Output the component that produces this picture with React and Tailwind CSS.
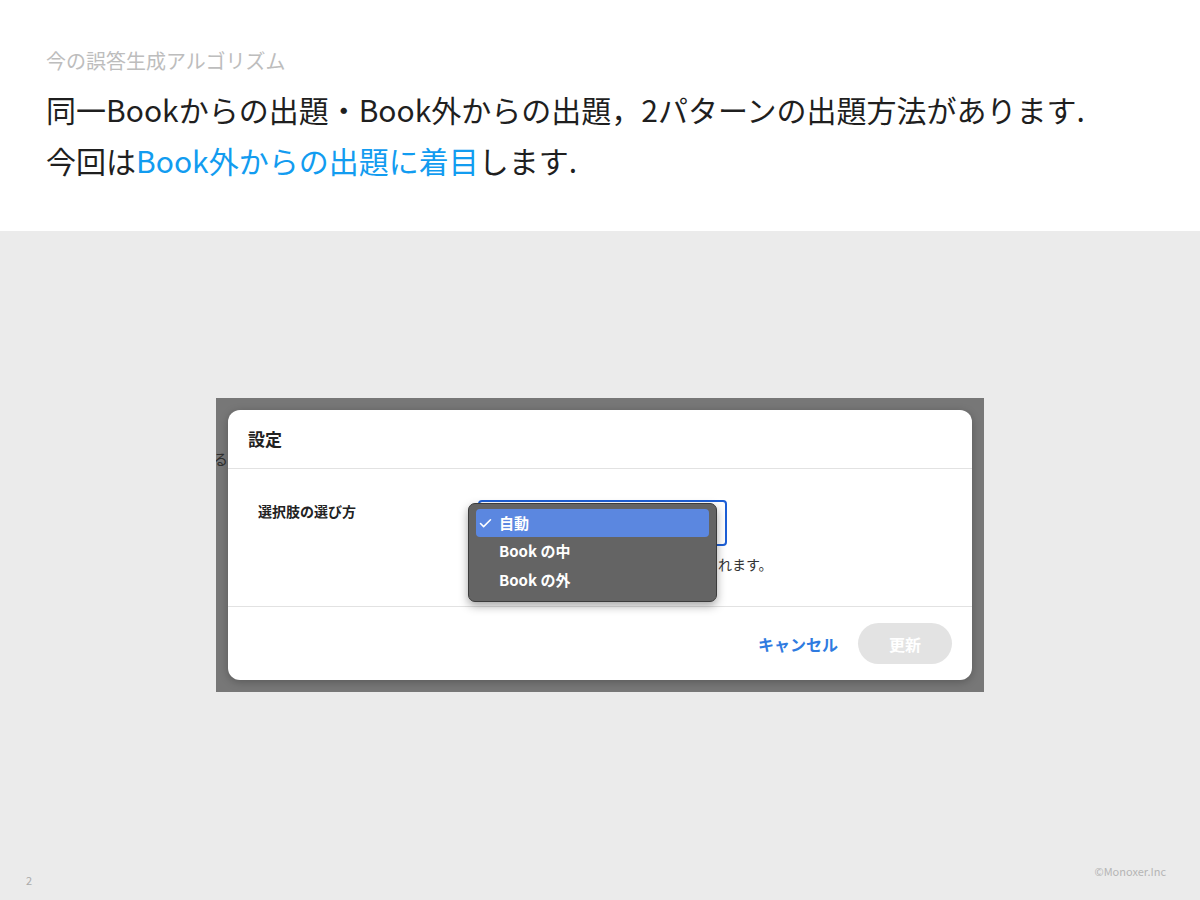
import { Check } from "lucide-react";

const jp = { fontFamily: '"Noto Sans CJK JP", "Noto Sans", sans-serif' };

function SettingsShot() {
  return (
    <div className="relative w-[768px] h-[294px] bg-[#777777] p-3 overflow-hidden">
      {/* leftover glyph from the page behind the modal */}
      <span className="absolute left-[-3px] top-[50px] text-[15px] text-[#2f2f2f]">る</span>

      <div className="relative w-[744px] h-[270px] bg-white rounded-xl shadow-[0_2px_8px_rgba(0,0,0,0.25)] flex flex-col">
        <div className="h-[59px] flex items-center px-5 border-b border-[#e2e2e2]">
          <span className="text-[17px] font-bold text-[#222]">設定</span>
        </div>

        <div className="h-[138px] border-b border-[#e2e2e2] flex pt-[31px] pl-[30px]">
          <div className="w-[220px] text-[14px] font-bold text-[#222] leading-[20px] pt-[1px]">選択肢の選び方</div>
          <div className="flex flex-col">
            <div className="w-[249px] h-[46px] border-2 border-[#1d5fd6] rounded-[4px]" />
            {/* the rest of this hint sits behind the open menu */}
            <div className="mt-[9px] pl-[240px] text-[14px] text-[#333] leading-[18px] whitespace-nowrap">
              れます。
            </div>
          </div>
        </div>

        <div className="flex-1 flex items-center justify-end gap-5 pr-5">
          <button className="text-[16px] font-bold text-[#2f7be0]">キャンセル</button>
          <button className="w-[94px] h-[41px] rounded-full bg-[#e3e3e3] text-white text-[16px] font-bold">更新</button>
        </div>

        {/* open native select menu */}
        <div className="absolute left-[240px] top-[93px] w-[249px] h-[99px] rounded-[7px] bg-[#646464] border border-[#3c3c3c] shadow-[0_4px_10px_rgba(0,0,0,0.35)] px-[7px] py-[5px] flex flex-col text-white text-[15px] font-bold">
          <div className="h-[28px] rounded-[4px] bg-[#5b87e0] flex items-center pl-[2px]">
            <Check size={15} strokeWidth={2.5} className="mr-[6px]" />
            <span>自動</span>
          </div>
          <div className="h-[29px] flex items-center pl-[23px]">Book の中</div>
          <div className="h-[29px] flex items-center pl-[23px]">Book の外</div>
        </div>
      </div>
    </div>
  );
}

export default function App() {
  return (
    <div className="w-[1200px] h-[900px] flex flex-col bg-[#ebebeb]" style={jp}>
      <div className="h-[231px] bg-white pl-[46px] pt-[48px]">
        <div className="text-[20px] leading-[26px] text-[#bdbdbd]">今の誤答生成アルゴリズム</div>
        <div className="mt-[10px] text-[30px] leading-[51px] text-[#1f1f1f]">
          <div>同一Bookからの出題・Book外からの出題，2パターンの出題方法があります.</div>
          <div>
            今回は<span className="text-[#129cf0]">Book外からの出題に着目</span>します.
          </div>
        </div>
      </div>

      <div className="relative flex-1 flex flex-col">
        <div className="pl-[216px] pt-[167px]">
          <SettingsShot />
        </div>
        <div className="absolute left-[26px] bottom-[12px] text-[11px] text-[#aaaaaa]">2</div>
        <div className="absolute right-[34px] bottom-[21px] text-[11px] text-[#b5b5b5]">©Monoxer.Inc</div>
      </div>
    </div>
  );
}
